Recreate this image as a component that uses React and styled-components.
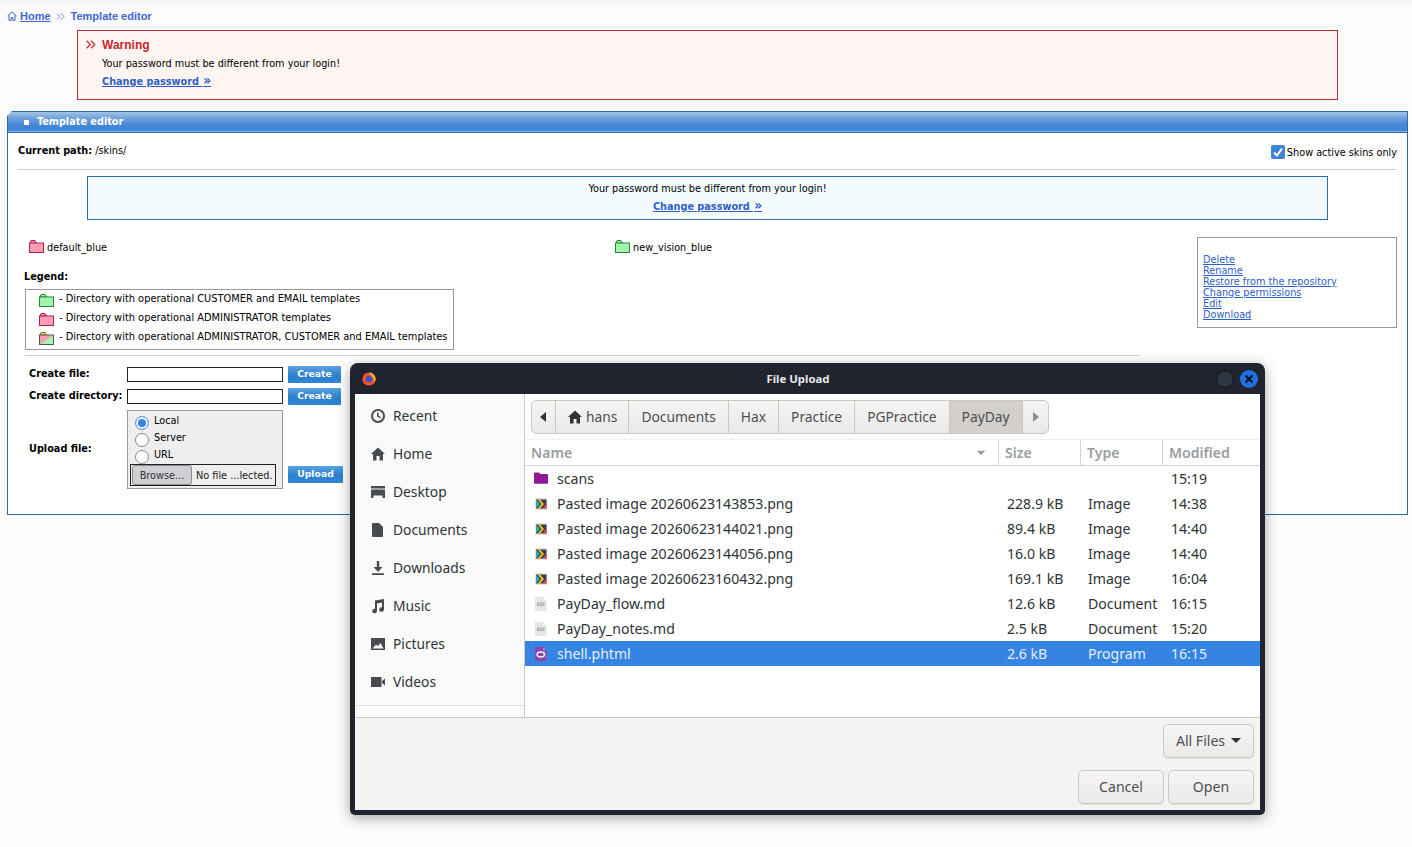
import React from "react";
import styled, { createGlobalStyle } from "styled-components";

const Global = createGlobalStyle`
  html, body { margin: 0; padding: 0; background: #fcfcfc; }
  #root { position: relative; min-height: 847px; overflow: hidden; }
  * { box-sizing: border-box; }
`;
const Page = styled.div`
  height: 847px;
  padding: 9px 4px 0 7px;
  font: 10.8px/14px "DejaVu Sans Condensed", "DejaVu Sans", sans-serif;
  color: #000;
  background: linear-gradient(#f4f4f4 0, #fcfcfc 6px);
`;
const Crumbs = styled.div`
  display: flex; align-items: center; height: 14px;
  font: bold 11px/14px "Liberation Sans", sans-serif; color: #3d66d8;
`;
const CrumbLink = styled.a`
  color: #3d66d8; text-decoration: underline; margin: 0 5px 0 3px;
`;
const CrumbSep = styled.svg`
  width: 9px; height: 9px; margin-right: 6px;
`;
const Warn = styled.div`
  margin: 7px 0 0 70px; width: 1261px; height: 70px;
  border: 1px solid #c02a2e; background: #fff6f4;
  padding: 6px 0 0 24px; position: relative;
`;
const WarnMark = styled.svg`
  position: absolute; left: 8px; top: 9px; width: 10px; height: 9px;
`;
const WarnTitle = styled.div`
  font: bold 12px/17px "Liberation Sans", sans-serif; color: #c6282c;
`;
const WarnLine = styled.div`
  margin-top: 3px; line-height: 14px;
`;
const BoldLink = styled.a`
  font-weight: bold; color: #2e5fc6; text-decoration: underline; display: block;
  margin-top: 3px; line-height: 14px;
`;
const Guillemet = styled.span`
  font-size: 13.5px; line-height: 13px; margin-left: 1px;
`;
const Panel = styled.section`
  margin-top: 11px; width: 1401px; height: 404px;
  border: 1px solid #2a6ab5; background: #fff; position: relative;
  &::before {
    content: ""; position: absolute; left: -1px; top: -1px; width: 0; height: 0;
    border-top: 5px solid #fcfcfc; border-right: 5px solid transparent;
  }
`;
const PanelHead = styled.div`
  height: 21px; padding: 0 0 0 16px; display: flex; align-items: center; gap: 8px;
  background: linear-gradient(#a4c3e6, #79a7dc 25%, #4486d6 65%, #4185d6);
  border-bottom: 1px solid #2a6ab5;
  color: #fff; font-weight: bold;
  box-shadow: inset 0 -1px 0 #8cb6e6;
`;
const Bullet = styled.i`
  width: 5px; height: 5px; background: #fff; display: block;
`;
const TopRow = styled.div`
  display: flex; justify-content: space-between; margin: 0 10px; height: 37px;
  border-bottom: 1px solid #d2d2d2; padding-top: 11px;
`;
const Check = styled.label`
  display: flex; align-items: flex-start; gap: 2px; margin-top: 2px;
`;
const CheckBox = styled.svg`
  width: 14px; height: 14px; margin-top: -1px;
`;
const Info = styled.div`
  margin: 6px 0 0 79px; width: 1241px; height: 44px;
  border: 1px solid #2a6ab5; background: #f4fbff;
  text-align: center; padding-top: 5px;
`;
const Body = styled.div`
  display: flex; align-items: flex-start; padding: 17px 0 0 16px;
`;
const Main = styled.div`
  width: 1173px; flex: none;
`;
const Folders = styled.div`
  display: grid; grid-template-columns: 586px 1fr; padding: 4px 0 0 5px; height: 20px;
`;
const FolderItem = styled.div`
  display: flex; align-items: flex-start; gap: 3px; height: 16px;
`;
const Legend = styled.div`
  font-weight: bold; margin-top: 13px; line-height: 14px;
`;
const LegendBox = styled.div`
  margin: 5px 0 0 1px; width: 429px; height: 61px; border: 1px solid #999;
  padding: 2px 0 0 13px; display: flex; flex-direction: column; gap: 5px;
  font-size: 10.95px;
`;
const LegendRow = styled.div`
  display: flex; align-items: flex-start; gap: 5px; height: 14px; white-space: nowrap;
`;
const SmallFolder = styled.svg`
  width: 15px; height: 13px; flex: none; margin-top: ${p => p.$mt ?? 2}px;
`;
const Rule = styled.div`
  margin: 5px 0 0 1px; width: 1115px; height: 1px; background: #d2d2d2;
`;
const FormGrid = styled.div`
  display: grid; grid-template-columns: 98px 156px 5px 55px;
  padding: 10px 0 0 5px; row-gap: 5px; align-items: start;
`;
const FormLabel = styled.div`
  font-weight: bold; line-height: 14px; padding-top: ${p => p.$top || 1}px; white-space: nowrap;
`;
const TextInput = styled.div`
  width: 156px; height: 15px; border: 1px solid #222; background: #fff; margin-top: 1px;
`;
const BlueBtn = styled.button`
  grid-column: 4; width: ${p => p.$w || 53}px; height: 17px; border: 0;
  color: #fff; font: bold 9.3px/14px "DejaVu Sans", sans-serif;
  background: linear-gradient(#5ba2e0, #2b80cf 55%, #2f86d6);
  border-radius: 1px; padding: 0 0 1px;
`;
const UploadBox = styled.div`
  width: 156px; height: 79px; border: 1px solid #999; background: #eee;
  padding: 3px 2px 0 2px; position: relative;
`;
const RadioRow = styled.div`
  display: flex; gap: 5px; height: 17px; line-height: 14px; padding-left: 5px;
`;
const Radio = styled.i`
  display: block; width: 14px; height: 14px; border-radius: 50%; flex: none; margin-top: 2px;
  background: ${p => p.$on ? "#3584e4" : "#fff"};
  border: 1px solid ${p => p.$on ? "#5f9de8" : "#888"};
  box-shadow: ${p => p.$on ? "inset 0 0 0 2px #fff" : "none"};
`;
const FileBox = styled.div`
  position: absolute; left: 2px; bottom: 2px; width: 146px; height: 22px;
  border: 1px solid #222; display: flex; align-items: center; white-space: nowrap;
`;
const Browse = styled.div`
  width: 60px; height: 20px; margin-left: 1px; background: #d0d0d4; border: 1px solid #8a8a90;
  border-radius: 3px; text-align: center; line-height: 19px; color: #333;
`;
const FileName = styled.span`
  margin-left: 4px; color: #222; padding-top: 1px;
`;
const Actions = styled.aside`
  width: 200px; height: 91px; border: 1px solid #999; padding: 16px 0 0 5px;
  display: flex; flex-direction: column; flex: none;
`;
const ActionLink = styled.a`
  color: #2e5fc6; text-decoration: underline; line-height: 11px; height: 11px; white-space: nowrap;
`;

/* file dialog */
const Dialog = styled.div`
  position: absolute; left: 350px; top: 363px; width: 915px; height: 452px;
  background: #20242e; border-radius: 8px 8px 5px 5px; padding: 0 5px 5px;
  display: flex; flex-direction: column;
  box-shadow: 0 3px 14px rgba(0,0,0,.35);
  font: 14.1px/20px "Noto Sans", sans-serif; color: #2e3436;
`;
const TitleBar = styled.div`
  height: 31px; flex: none; display: flex; align-items: center; justify-content: center;
  position: relative; color: #e8e8e8; font: bold 11.4px/16px "Noto Sans", sans-serif;
  padding-right: 19px;
`;
const Fox = styled.svg`
  position: absolute; left: 7px; top: 8px; width: 14px; height: 15px;
`;
const WinBtns = styled.div`
  position: absolute; right: 2px; top: 7px; display: flex; gap: 6px;
`;
const WinBtn = styled.div`
  width: 18px; height: 18px; border-radius: 50%; display: flex; align-items: center; justify-content: center;
  background: ${p => p.$close ? "#1f6fe5" : "#2f3442"};
  border: ${p => p.$close ? "0" : "1px solid #0f1116"};
`;
const DlgBody = styled.div`
  flex: none; height: 324px; display: flex; background: #fff; border-bottom: 1px solid #cdc7c2;
`;
const Side = styled.nav`
  width: 170px; flex: none; background: #fafafa; border-right: 1px solid #cdc7c2;
  padding-top: 3px; position: relative; font-size: 13.8px;
`;
const SideItem = styled.div`
  height: 38px; display: flex; align-items: center; gap: 7px; padding: 0 0 0 15px; color: #2e3436;
`;
const SideIcon = styled.svg`
  width: 16px; height: 16px; flex: none; fill: #484c50;
`;
const SideSep = styled.div`
  position: absolute; left: 0; right: 0; top: 311px; height: 1px; background: #e0dedb;
`;
const Right = styled.div`
  flex: 1; display: flex; flex-direction: column; min-width: 0;
`;
const PathWrap = styled.div`
  height: 46px; padding: 6px 0 0 6px; flex: none; font-size: 13.8px;
`;
const PathBar = styled.div`
  display: inline-flex; height: 34px; border: 1px solid #cdc7c2; border-radius: 5px; overflow: hidden;
  background: linear-gradient(#f6f5f3, #ebe9e7);
`;
const Crumb = styled.div`
  display: flex; align-items: center; gap: 3px; padding: 0 ${p => p.$pad ?? 12}px 1px;
  border-left: ${p => p.$first ? "0" : "1px solid #cdc7c2"};
  background: ${p => p.$active ? "#d3cfcb" : "transparent"};
  color: #4b5054;
`;
const Tri = styled.svg`
  width: 7px; height: 10px; fill: ${p => p.$c || "#2e3436"};
`;
const HeadRow = styled.div`
  display: grid; grid-template-columns: 473px 82px 82px 1fr; height: 27px; flex: none;
  border-bottom: 1px solid #d8d4d0; border-top: 1px solid #f1efed; margin-top: -1px;
  color: #9a9da0;
`;
const HeadCell = styled.div`
  display: flex; align-items: center; justify-content: space-between; padding: 0 12px 0 6px;
  border-left: ${p => p.$first ? "0" : "1px solid #d8d4d0"}; font-weight: 600;
`;
const FileRow = styled.div`
  display: grid; grid-template-columns: 473px 82px 82px 1fr; height: 25px; align-items: center;
  background: ${p => p.$sel ? "#3584e4" : "transparent"};
  color: ${p => p.$sel ? "#e6effa" : "#2e3436"};
`;
const NameCell = styled.div`
  display: flex; align-items: center; gap: 8px; padding-left: 9px; white-space: nowrap;
`;
const Cell = styled.div`
  padding-left: ${p => p.$pl || 9}px; white-space: nowrap;
`;
const FileIcon = styled.svg`
  width: 14px; height: 16px; flex: none; margin-right: 1px;
`;
const Footer = styled.div`
  flex: 1; background: #f4f3f1; padding: 6px 6px 0 0; display: flex; flex-direction: column; align-items: flex-end; gap: 12px;
`;
const DlgBtn = styled.div`
  height: 34px; width: ${p => p.$w}px; display: flex; align-items: center; justify-content: center; gap: 6px;
  border: 1px solid #cdc7c2; border-radius: 5px; background: linear-gradient(#f6f5f3, #eceae8);
  box-shadow: 0 1px 0 #e4e2df; color: #4b5054; padding-bottom: 1px;
`;
const BtnRow = styled.div`
  display: flex; gap: 4px;
`;

const folderColors = {
  pink: ["#ff9db5", "#b0204c"],
  green: ["#a3f5ac", "#1f8a3c"],
};
const Folder = ({ kind, mt }) => {
  if (kind === "both") {
    return (
      <SmallFolder viewBox="0 0 15 13" $mt={mt}>
        <path d="M1 3 L2 .5 H6 L7.5 3 Z" fill="#e8e27a" stroke="#7a6a20" />
        <rect x="0.5" y="3" width="14" height="9.5" fill="#ff9db5" stroke="#555" />
        <path d="M1 12 L14 3.5 V12 Z" fill="#a3f5ac" />
      </SmallFolder>
    );
  }
  const [f, s] = folderColors[kind];
  return (
    <SmallFolder viewBox="0 0 15 13" $mt={mt}>
      <path d="M1 3 L2 .5 H6 L7.5 3 Z" fill={f} stroke={s} />
      <rect x="0.5" y="3" width="14" height="9.5" fill={f} stroke={s} />
    </SmallFolder>
  );
};

const ImgIcon = () => (
  <FileIcon viewBox="0 0 14 16">
    <rect x="1" y="2" width="12" height="12" fill="#e4e4e4" />
    <rect x="2" y="3.5" width="10.5" height="9" fill="#3a3f4a" />
    <path d="M2 3.5 L6 8 L2 12.5 Z" fill="#27a7b8" />
    <path d="M3.5 3.5 H6 L10 8 L6 12.5 H3.5 L7.5 8 Z" fill="#f2c21c" />
    <path d="M12.5 7.5 V12.5 H8.5 Z" fill="#e8484a" />
  </FileIcon>
);
const DocIcon = () => (
  <FileIcon viewBox="0 0 14 16">
    <path d="M1 1 H9 L12.5 4.5 V15 H1 Z" fill="#e6e6e6" />
    <path d="M9 1 L12.5 4.5 H9 Z" fill="#f4f4f4" />
    <rect x="3" y="6.5" width="7.5" height="3.5" fill="#b4b4b4" />
    <path d="M5.5 7.5 V9 M8 7.5 V9" stroke="#e6e6e6" />
  </FileIcon>
);
const PhpIcon = () => (
  <FileIcon viewBox="0 0 14 16">
    <path d="M1 1 H9 L12.5 4.5 V15 H1 Z" fill="#8e44ad" />
    <path d="M9 1 L12.5 4.5 H9 Z" fill="#b582cc" />
    <ellipse cx="6.8" cy="8.5" rx="3.7" ry="2.4" fill="none" stroke="#eee" strokeWidth="1.5" />
  </FileIcon>
);
const DirIcon = () => (
  <FileIcon viewBox="0 0 14 16">
    <path d="M0 2.5 Q0 1.5 1 1.5 H5 L6.5 3 H13 Q14 3 14 4 V12 Q14 12.7 13 12.7 H1 Q0 12.7 0 12 Z" fill="#8d1a94" />
  </FileIcon>
);

const files = [
  ["dir", "scans", "", "", "15:19"],
  ["img", "Pasted image 20260623143853.png", "228.9 kB", "Image", "14:38"],
  ["img", "Pasted image 20260623144021.png", "89.4 kB", "Image", "14:40"],
  ["img", "Pasted image 20260623144056.png", "16.0 kB", "Image", "14:40"],
  ["img", "Pasted image 20260623160432.png", "169.1 kB", "Image", "16:04"],
  ["doc", "PayDay_flow.md", "12.6 kB", "Document", "16:15"],
  ["doc", "PayDay_notes.md", "2.5 kB", "Document", "15:20"],
  ["php", "shell.phtml", "2.6 kB", "Program", "16:15"],
];
const icons = { dir: DirIcon, img: ImgIcon, doc: DocIcon, php: PhpIcon };

const sideItems = [
  ["Recent", <path key="r" fillRule="evenodd" d="M8 1a7 7 0 1 1 0 14A7 7 0 0 1 8 1Zm0 2a5 5 0 1 0 0 10A5 5 0 0 0 8 3Zm-1 1.5h1.6v3.2l2.4 1.5-.8 1.3L7 8.6Z" />],
  ["Home", <path key="h" d="M8 1.5 15 8h-2v6.5H9.5V10h-3v4.5H3V8H1Z" />],
  ["Desktop", <path key="d" d="M1 2h14v2.5H1ZM1 5.5h14v8.5h-2.5v-2.5h-9V14H1Z" />],
  ["Documents", <path key="c" d="M3 1h6l4 4v9a1 1 0 0 1-1 1H3a1 1 0 0 1-1-1V2a1 1 0 0 1 1-1Z" />],
  ["Downloads", <path key="w" d="M6.8 1h2.4v6H12.5L8 12 3.5 7h3.3ZM2 13.2h12v1.8H2Z" />],
  ["Music", <path key="m" d="M5 2.5 14 1v10.5a2.4 2.2 0 1 1-2-2.2V4.5L7 5.4V13a2.4 2.2 0 1 1-2-2.2Z" />],
  ["Pictures", <path key="p" fillRule="evenodd" d="M1 2h14v12H1Zm1.5 10.5h11L10.5 7 8 10 6 8.5Z" />],
  ["Videos", <path key="v" d="M1 3h10.5v10H1ZM12 7l3-2.5v7L12 9Z" />],
];

export default function App() {
  return (
    <>
      <Global />
      <Page>
        <Crumbs>
          <svg width="10" height="10" viewBox="0 0 10 10" fill="none" stroke="#3a63b8">
            <path d="M.5 5 5 .8 9.5 5M2 4.2V9.3H4.2V6.4H5.8V9.3H8V4.2" />
          </svg>
          <CrumbLink>Home</CrumbLink>
          <CrumbSep viewBox="0 0 9 9" fill="none" stroke="#7d93c9">
            <path d="M1 2 4 4.5 1 7M4.5 1 8 4.5 4.5 8" />
          </CrumbSep>
          Template editor
        </Crumbs>
        <Warn>
          <WarnMark viewBox="0 0 10 9" fill="none" stroke="#cf3033" strokeWidth="1.3">
            <path d="M.7 .7 4.3 4.5.7 8.3M5 .7 8.8 4.5 5 8.3" />
          </WarnMark>
          <WarnTitle>Warning</WarnTitle>
          <WarnLine>Your password must be different from your login!</WarnLine>
          <BoldLink>Change password <Guillemet>»</Guillemet></BoldLink>
        </Warn>
        <Panel>
          <PanelHead><Bullet />Template editor</PanelHead>
          <TopRow>
            <div><b>Current path:</b> /skins/</div>
            <Check>
              <CheckBox viewBox="0 0 14 14">
                <rect width="14" height="14" rx="2" fill="#3f84d8" />
                <path d="M3 7.5 6 10.5 11 3.5" fill="none" stroke="#fff" strokeWidth="2" />
              </CheckBox>
              Show active skins only
            </Check>
          </TopRow>
          <Info>
            Your password must be different from your login!
            <BoldLink>Change password <Guillemet>»</Guillemet></BoldLink>
          </Info>
          <Body>
            <Main>
              <Folders>
                <FolderItem><Folder kind="pink" mt={-1} />default_blue</FolderItem>
                <FolderItem><Folder kind="green" mt={-1} />new_vision_blue</FolderItem>
              </Folders>
              <Legend>Legend:</Legend>
              <LegendBox>
                <LegendRow><Folder kind="green" />- Directory with operational CUSTOMER and EMAIL templates</LegendRow>
                <LegendRow><Folder kind="pink" />- Directory with operational ADMINISTRATOR templates</LegendRow>
                <LegendRow><Folder kind="both" />- Directory with operational ADMINISTRATOR, CUSTOMER and EMAIL templates</LegendRow>
              </LegendBox>
              <Rule />
              <FormGrid>
                <FormLabel>Create file:</FormLabel>
                <TextInput />
                <span />
                <BlueBtn>Create</BlueBtn>
                <FormLabel>Create directory:</FormLabel>
                <TextInput />
                <span />
                <BlueBtn>Create</BlueBtn>
                <FormLabel $top={32}>Upload file:</FormLabel>
                <UploadBox>
                  <RadioRow><Radio $on />Local</RadioRow>
                  <RadioRow><Radio />Server</RadioRow>
                  <RadioRow><Radio />URL</RadioRow>
                  <FileBox><Browse>Browse...</Browse><FileName>No file ...lected.</FileName></FileBox>
                </UploadBox>
                <span />
                <BlueBtn $w={55} style={{ marginTop: 56 }}>Upload</BlueBtn>
              </FormGrid>
            </Main>
            <Actions>
              <ActionLink>Delete</ActionLink>
              <ActionLink>Rename</ActionLink>
              <ActionLink>Restore from the repository</ActionLink>
              <ActionLink>Change permissions</ActionLink>
              <ActionLink>Edit</ActionLink>
              <ActionLink>Download</ActionLink>
            </Actions>
          </Body>
        </Panel>
      </Page>
      <Dialog>
        <TitleBar>
          <Fox viewBox="0 0 14 15">
            <circle cx="7" cy="8" r="6.6" fill="#e8552f" />
            <path d="M7 1.2c3.5.6 6.8 3 6.6 7-.2 1.5-1 2.8-2 3.6 1-2.5.2-5-1.8-6.4C9.5 3.7 8 2.5 7 1.2Z" fill="#fdb32b" />
            <circle cx="7" cy="8" r="3.2" fill="#3f4fc8" />
          </Fox>
          File Upload
          <WinBtns>
            <WinBtn />
            <WinBtn $close>
              <svg width="10" height="10" viewBox="0 0 10 10"><path d="M1.5 1.5 8.5 8.5M8.5 1.5 1.5 8.5" stroke="#0b1020" strokeWidth="2.2" /></svg>
            </WinBtn>
          </WinBtns>
        </TitleBar>
        <DlgBody>
          <Side>
            {sideItems.map(([label, d]) => (
              <SideItem key={label}>
                <SideIcon viewBox="0 0 16 16">{d}</SideIcon>
                {label}
              </SideItem>
            ))}
            <SideSep />
          </Side>
          <Right>
            <PathWrap>
              <PathBar>
                <Crumb $first $pad={8}><Tri viewBox="0 0 7 10"><path d="M6 0v10L0 5Z" /></Tri></Crumb>
                <Crumb $pad={11}>
                  <SideIcon viewBox="0 0 16 16" style={{ fill: "#2e3436" }}><path d="M8 1.5 15 8h-2v6.5H9.5V10h-3v4.5H3V8H1Z" /></SideIcon>
                  hans
                </Crumb>
                <Crumb>Documents</Crumb>
                <Crumb>Hax</Crumb>
                <Crumb>Practice</Crumb>
                <Crumb>PGPractice</Crumb>
                <Crumb $active>PayDay</Crumb>
                <Crumb $pad={9}><Tri $c="#8d9091" viewBox="0 0 7 10"><path d="M1 0v10l6-5Z" /></Tri></Crumb>
              </PathBar>
            </PathWrap>
            <HeadRow>
              <HeadCell $first>Name<Tri $c="#9a9da0" viewBox="0 0 10 7" style={{ width: 10, height: 6 }}><path d="M0 1h10L5 6Z" /></Tri></HeadCell>
              <HeadCell>Size</HeadCell>
              <HeadCell>Type</HeadCell>
              <HeadCell>Modified</HeadCell>
            </HeadRow>
            {files.map(([t, name, size, type, mod]) => {
              const I = icons[t];
              return (
                <FileRow key={name} $sel={t === "php"}>
                  <NameCell><I />{name}</NameCell>
                  <Cell>{size}</Cell>
                  <Cell $pl={8}>{type}</Cell>
                  <Cell $pl={9}>{mod}</Cell>
                </FileRow>
              );
            })}
          </Right>
        </DlgBody>
        <Footer>
          <DlgBtn $w={91}>All Files<Tri $c="#2e3436" viewBox="0 0 10 6" style={{ width: 10, height: 6 }}><path d="M0 0h10L5 5Z" /></Tri></DlgBtn>
          <BtnRow>
            <DlgBtn $w={86}>Cancel</DlgBtn>
            <DlgBtn $w={86}>Open</DlgBtn>
          </BtnRow>
        </Footer>
      </Dialog>
    </>
  );
}
